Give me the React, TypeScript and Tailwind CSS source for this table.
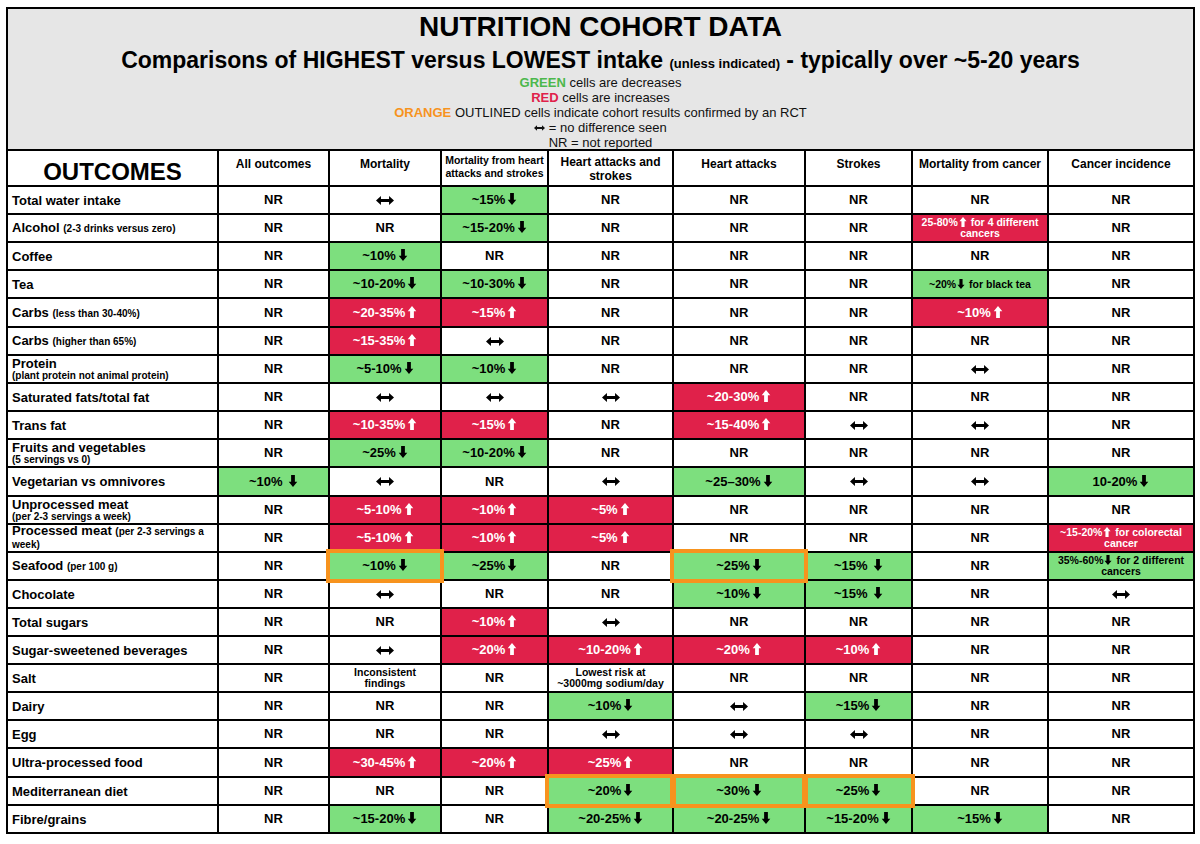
import React from 'react'

type C = string | { t: string; c?: 'g' | 'r'; sm?: boolean; o?: boolean }

const g = (t: string, o = false): C => ({ t, c: 'g', o })
const r = (t: string): C => ({ t, c: 'r' })
const gs = (t: string): C => ({ t, c: 'g', sm: true })
const rs = (t: string): C => ({ t, c: 'r', sm: true })
const s = (t: string): C => ({ t, sm: true })

function Down({ sm }: { sm?: boolean }) {
  return (
    <svg viewBox="0 0 10 14" fill="currentColor" className={sm ? 'inline-block w-[8px] h-[10px] mx-[1px] -mt-[2px] align-middle' : 'inline-block w-[10px] h-[12px] ml-[2px] -mt-[3px] align-middle'}>
      <path d="M2.8 0h4.4v8H10L5 14 0 8h2.8z" />
    </svg>
  )
}

function Up({ sm }: { sm?: boolean }) {
  return (
    <svg viewBox="0 0 10 14" fill="currentColor" className={sm ? 'inline-block w-[8px] h-[10px] mx-[1px] -mt-[2px] align-middle' : 'inline-block w-[10px] h-[12px] ml-[2px] -mt-[3px] align-middle'}>
      <path d="M5 0l5 6H7.2v8H2.8V6H0z" />
    </svg>
  )
}

function LR({ small }: { small?: boolean }) {
  return (
    <svg viewBox="0 0 20 10" fill="currentColor" className={small ? 'inline-block w-[11px] h-[6px] align-middle -mt-[2px]' : 'inline-block w-[18px] h-[9px]'}>
      <path d="M0 5l5.5-5v3.2h9V0L20 5l-5.5 5V6.8h-9V10z" />
    </svg>
  )
}

function Txt({ t, sm }: { t: string; sm?: boolean }) {
  return (
    <>
      {t.split(/([↑↓])/).map((p, i) =>
        p === '↓' ? <Down key={i} sm={sm} /> : p === '↑' ? <Up key={i} sm={sm} /> : <span key={i}>{p}</span>
      )}
    </>
  )
}

const S = ({ children }: { children: React.ReactNode }) => <span className="text-[10px]">{children}</span>

const rows: { l: React.ReactNode; c: C[] }[] = [
  { l: 'Total water intake', c: ['NR', '↔', g('~15%↓'), 'NR', 'NR', 'NR', 'NR', 'NR'] },
  { l: <>Alcohol <S>(2-3 drinks versus zero)</S></>, c: ['NR', 'NR', g('~15-20%↓'), 'NR', 'NR', 'NR', rs('25-80%↑ for 4 different cancers'), 'NR'] },
  { l: 'Coffee', c: ['NR', g('~10%↓'), 'NR', 'NR', 'NR', 'NR', 'NR', 'NR'] },
  { l: 'Tea', c: ['NR', g('~10-20%↓'), g('~10-30%↓'), 'NR', 'NR', 'NR', gs('~20%↓ for black tea'), 'NR'] },
  { l: <>Carbs <S>(less than 30-40%)</S></>, c: ['NR', r('~20-35%↑'), r('~15%↑'), 'NR', 'NR', 'NR', r('~10%↑'), 'NR'] },
  { l: <>Carbs <S>(higher than 65%)</S></>, c: ['NR', r('~15-35%↑'), '↔', 'NR', 'NR', 'NR', 'NR', 'NR'] },
  {
    l: <div className="leading-[12px]"><div>Protein</div><div className="text-[10px] leading-[11px]">(plant protein not animal protein)</div></div>,
    c: ['NR', g('~5-10%↓'), g('~10%↓'), 'NR', 'NR', 'NR', '↔', 'NR'],
  },
  { l: 'Saturated fats/total fat', c: ['NR', '↔', '↔', '↔', r('~20-30%↑'), 'NR', 'NR', 'NR'] },
  { l: 'Trans fat', c: ['NR', r('~10-35%↑'), r('~15%↑'), 'NR', r('~15-40%↑'), '↔', '↔', 'NR'] },
  {
    l: <div className="leading-[12px]"><div>Fruits and vegetables</div><div className="text-[10px] leading-[11px]">(5 servings vs 0)</div></div>,
    c: ['NR', g('~25%↓'), g('~10-20%↓'), 'NR', 'NR', 'NR', 'NR', 'NR'],
  },
  { l: 'Vegetarian vs omnivores', c: [g('~10% ↓'), '↔', 'NR', '↔', g('~25–30%↓'), '↔', '↔', g('10-20%↓')] },
  {
    l: <div className="leading-[12px]"><div>Unprocessed meat</div><div className="text-[10px] leading-[11px]">(per 2-3 servings a week)</div></div>,
    c: ['NR', r('~5-10%↑'), r('~10%↑'), r('~5%↑'), 'NR', 'NR', 'NR', 'NR'],
  },
  {
    l: <div className="leading-[12px]">Processed meat <S>(per 2-3 servings a week)</S></div>,
    c: ['NR', r('~5-10%↑'), r('~10%↑'), r('~5%↑'), 'NR', 'NR', 'NR', rs('~15-20%↑ for colorectal cancer')],
  },
  { l: <>Seafood <S>(per 100 g)</S></>, c: ['NR', g('~10%↓', true), g('~25%↓'), 'NR', g('~25%↓', true), g('~15% ↓'), 'NR', gs('35%-60%↓ for 2 different cancers')] },
  { l: 'Chocolate', c: ['NR', '↔', 'NR', 'NR', g('~10%↓'), g('~15% ↓'), 'NR', '↔'] },
  { l: 'Total sugars', c: ['NR', 'NR', r('~10%↑'), '↔', 'NR', 'NR', 'NR', 'NR'] },
  { l: 'Sugar-sweetened beverages', c: ['NR', '↔', r('~20%↑'), r('~10-20%↑'), r('~20%↑'), r('~10%↑'), 'NR', 'NR'] },
  { l: 'Salt', c: ['NR', s('Inconsistent findings'), 'NR', s('Lowest risk at ~3000mg sodium/day'), 'NR', 'NR', 'NR', 'NR'] },
  { l: 'Dairy', c: ['NR', 'NR', 'NR', g('~10%↓'), '↔', g('~15%↓'), 'NR', 'NR'] },
  { l: 'Egg', c: ['NR', 'NR', 'NR', '↔', '↔', '↔', 'NR', 'NR'] },
  { l: 'Ultra-processed food', c: ['NR', r('~30-45%↑'), r('~20%↑'), r('~25%↑'), 'NR', 'NR', 'NR', 'NR'] },
  { l: 'Mediterranean diet', c: ['NR', 'NR', 'NR', g('~20%↓', true), g('~30%↓', true), g('~25%↓', true), 'NR', 'NR'] },
  { l: 'Fibre/grains', c: ['NR', g('~15-20%↓'), 'NR', g('~20-25%↓'), g('~20-25%↓'), g('~15-20%↓'), g('~15%↓'), 'NR'] },
]

function Cell({ v }: { v: C }) {
  if (typeof v === 'string') {
    return (
      <div className="bg-white flex items-center justify-center text-[13px] font-bold text-black">
        {v === '↔' ? <LR /> : v}
      </div>
    )
  }
  const bg = v.c === 'g' ? 'bg-[#7ddf7e] text-black' : v.c === 'r' ? 'bg-[#e0214a] text-white' : 'bg-white text-black'
  return (
    <div className={`relative flex items-center justify-center text-center font-bold ${bg} ${v.sm ? 'text-[10.5px] leading-[11px] px-1' : 'text-[13px]'}`}>
      <div><Txt t={v.t} sm={v.sm} /></div>
      {v.o && <div className="absolute -inset-[4px] border-[4px] border-[#f7931e] z-10" />}
    </div>
  )
}

export default function App() {
  return (
    <div className="w-[1200px] h-[844px] bg-white pt-[7px] pl-[6px] font-[family-name:Liberation_Sans,Arial,sans-serif] text-black">
      <div className="w-[1189px] border-2 border-black bg-black grid grid-cols-[209px_109px_110px_105px_123px_130px_105px_134px_144px] grid-rows-[140px_34px_repeat(4,26px)_27px_repeat(5,26px)_27px_repeat(9,26px)_27px_repeat(2,26px)] gap-[2px]">
        {/* title block */}
        <div className="col-span-9 bg-[#e6e6e6] flex flex-col items-center pt-[3px]">
          <div className="text-[28px] leading-[30px] font-bold">NUTRITION COHORT DATA</div>
          <div className="mt-[5px] h-[26px] text-[23px] leading-[26px] font-bold whitespace-nowrap">
            Comparisons of HIGHEST versus LOWEST intake <span className="text-[13px] leading-none">(unless indicated)</span> - typically over ~5-20 years
          </div>
          <div className="pt-[2px] text-[13px] leading-[15px] text-center text-[#111]">
            <div><span className="text-[#4cb84c] font-bold">GREEN</span> cells are decreases</div>
            <div><span className="text-[#e0214a] font-bold">RED</span> cells are increases</div>
            <div><span className="text-[#f7931e] font-bold">ORANGE</span> OUTLINED cells indicate cohort results confirmed by an RCT</div>
            <div><LR small /> = no difference seen</div>
            <div>NR = not reported</div>
          </div>
        </div>

        {/* column headings */}
        <div className="bg-white flex items-center justify-center text-[24px] font-bold pt-[8px]">OUTCOMES</div>
        <div className="bg-white text-[12px] font-bold text-center pt-[4px]">All outcomes</div>
        <div className="bg-white text-[12px] font-bold text-center pt-[4px]">Mortality</div>
        <div className="bg-white text-[10.5px] leading-[13px] font-bold text-center pt-[3px]">Mortality from heart attacks and strokes</div>
        <div className="bg-white text-[12px] leading-[14px] font-bold text-center pt-[4px] px-2">Heart attacks and strokes</div>
        <div className="bg-white text-[12px] font-bold text-center pt-[4px]">Heart attacks</div>
        <div className="bg-white text-[12px] font-bold text-center pt-[4px]">Strokes</div>
        <div className="bg-white text-[12px] font-bold text-center pt-[4px]">Mortality from cancer</div>
        <div className="bg-white text-[12px] font-bold text-center pt-[4px]">Cancer incidence</div>

        {rows.map((row, i) => (
          <React.Fragment key={i}>
            <div className="bg-white flex items-center pl-[4px] text-[13px] leading-[15px] font-bold">
              <div>{row.l}</div>
            </div>
            {row.c.map((v, j) => <Cell key={j} v={v} />)}
          </React.Fragment>
        ))}
      </div>
    </div>
  )
}
